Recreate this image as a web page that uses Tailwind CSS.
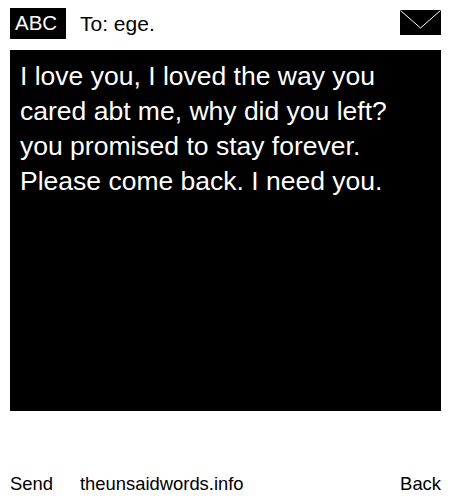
<!DOCTYPE html>
<html>
<head>
<meta charset="utf-8">
<script src="https://cdn.jsdelivr.net/npm/@tailwindcss/browser@4"></script>
</head>
<body class="bg-white text-black font-['Liberation_Sans',Arial,sans-serif]">
<div class="w-[450px] h-[500px] flex flex-col overflow-hidden">
    <!-- Header -->
    <div class="flex items-start justify-between pl-[10px] pr-[9px] pt-[8px] h-[50px]">
        <div class="flex items-center">
            <span class="bg-black text-white text-[20.5px] leading-[30px] w-[56px] h-[31px] pl-[5px]">ABC</span>
            <span class="ml-[14px] text-[21px] leading-[30px]">To: ege.</span>
        </div>
        <svg xmlns="http://www.w3.org/2000/svg" class="w-[41px] h-[25px] mt-[2px]" viewBox="0 0 41 25">
            <rect width="41" height="25" fill="#000" />
            <path d="M0.5 0.5L20.5 18L40.5 0.5" fill="none" stroke="#fff" stroke-width="1" />
        </svg>
    </div>
    <!-- Message -->
    <div class="ml-[10px] w-[431px] h-[361px] bg-black text-white text-[26.5px] leading-[35px] px-[10px] py-[9px]">
        I love you, I loved the way you<br>cared abt me, why did you left?<br>you promised to stay forever.<br>Please come back. I need you.
    </div>
    <!-- Footer -->
    <div class="flex items-center justify-between pl-[10px] pr-[9px] mt-[60px] text-[18.4px] leading-6 pt-px">
        <div class="flex">
            <span class="w-[70px]">Send</span>
            <span>theunsaidwords.info</span>
        </div>
        <span>Back</span>
    </div>
</div>
</body>
</html>
